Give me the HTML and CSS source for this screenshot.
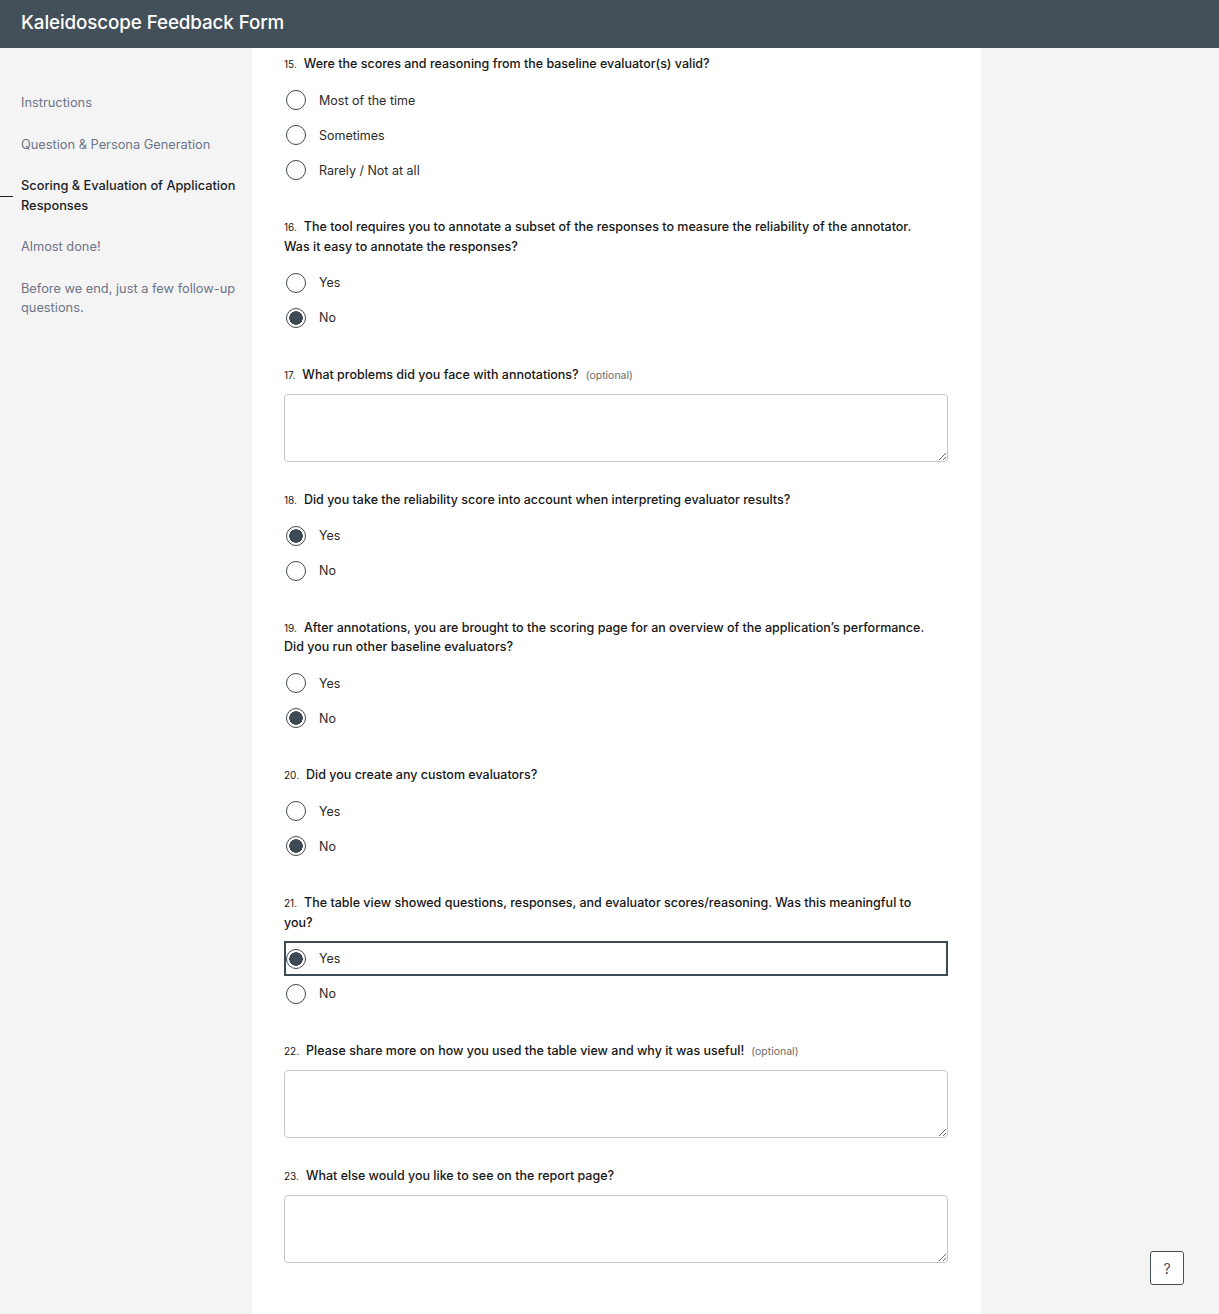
FILE: index.html
```html
<!DOCTYPE html>
<html lang="en">
<head>
    <meta charset="UTF-8">
    <title>Kaleidoscope Feedback Form</title>
    <link rel="stylesheet" href="styles.css">
</head>
<body>
<!--顶部标题栏-->
<header class="topbar">
    <h1 class="topbar_title">Kaleidoscope Feedback Form</h1>
</header>

<div class="layout">
    <!--左边导航-->
    <nav class="sidebar">
        <a href="#" class="sidebar_item">Instructions</a>
        <a href="#" class="sidebar_item">Question &amp; Persona Generation</a>
        <a href="#" class="sidebar_item current">Scoring &amp; Evaluation of Application Responses</a>
        <a href="#" class="sidebar_item">Almost done!</a>
        <a href="#" class="sidebar_item">Before we end, just a few follow-up questions.</a>
    </nav>

    <!--中间表单-->
    <main class="form_panel">
        <div class="question">
            <p class="question_label"><span class="question_num">15.</span>Were the scores and reasoning from the baseline evaluator(s) valid?</p>
            <div class="options">
                <label class="option"><input type="radio" name="q15"><span>Most of the time</span></label>
                <label class="option"><input type="radio" name="q15"><span>Sometimes</span></label>
                <label class="option"><input type="radio" name="q15"><span>Rarely / Not at all</span></label>
            </div>
        </div>

        <div class="question">
            <p class="question_label"><span class="question_num">16.</span>The tool requires you to annotate a subset of the responses to measure the reliability of the annotator. Was it easy to annotate the responses?</p>
            <div class="options">
                <label class="option"><input type="radio" name="q16"><span>Yes</span></label>
                <label class="option"><input type="radio" name="q16" checked><span>No</span></label>
            </div>
        </div>

        <div class="question">
            <p class="question_label"><span class="question_num">17.</span>What problems did you face with annotations?<span class="optional">(optional)</span></p>
            <textarea class="answer_box"></textarea>
        </div>

        <div class="question">
            <p class="question_label"><span class="question_num">18.</span>Did you take the reliability score into account when interpreting evaluator results?</p>
            <div class="options">
                <label class="option"><input type="radio" name="q18" checked><span>Yes</span></label>
                <label class="option"><input type="radio" name="q18"><span>No</span></label>
            </div>
        </div>

        <div class="question">
            <p class="question_label"><span class="question_num">19.</span>After annotations, you are brought to the scoring page for an overview of the application’s performance. Did you run other baseline evaluators?</p>
            <div class="options">
                <label class="option"><input type="radio" name="q19"><span>Yes</span></label>
                <label class="option"><input type="radio" name="q19" checked><span>No</span></label>
            </div>
        </div>

        <div class="question">
            <p class="question_label"><span class="question_num">20.</span>Did you create any custom evaluators?</p>
            <div class="options">
                <label class="option"><input type="radio" name="q20"><span>Yes</span></label>
                <label class="option"><input type="radio" name="q20" checked><span>No</span></label>
            </div>
        </div>

        <div class="question">
            <p class="question_label"><span class="question_num">21.</span>The table view showed questions, responses, and evaluator scores/reasoning. Was this meaningful to you?</p>
            <div class="options">
                <label class="option focused"><input type="radio" name="q21" checked><span>Yes</span></label>
                <label class="option"><input type="radio" name="q21"><span>No</span></label>
            </div>
        </div>

        <div class="question">
            <p class="question_label"><span class="question_num">22.</span>Please share more on how you used the table view and why it was useful!<span class="optional">(optional)</span></p>
            <textarea class="answer_box"></textarea>
        </div>

        <div class="question">
            <p class="question_label"><span class="question_num">23.</span>What else would you like to see on the report page?</p>
            <textarea class="answer_box"></textarea>
        </div>
    </main>
</div>

<!--右下角帮助按钮-->
<button class="help_btn" type="button">?</button>
</body>
</html>
```

FILE: styles.css
```css
*{
    margin: 0;
    padding: 0;
    box-sizing: border-box;
}
body
{
    font-family: Inter, "Noto Sans", sans-serif;
    background: #f4f4f4;
    color: #161616;
}
.topbar
{
    height: 48px;
    background: #435059;
    display: flex;
    align-items: center;
    padding: 0 0 4px 21px;
}
.topbar_title
{
    color: #fff;
    font-size: 18.8px;
    font-weight: 500;
    letter-spacing: -0.1px;
}
.layout
{
    display: flex;
    min-height: calc(100vh - 48px);
}

/*左边导航*/
.sidebar
{
    width: 252px;
    flex-shrink: 0;
    padding: 45px 8px 0 21px;
    display: flex;
    flex-direction: column;
    gap: 22px;
}
.sidebar_item
{
    position: relative;
    font-size: 12.8px;
    line-height: 19.5px;
    color: #6c7489;
    text-decoration: none;
}
.sidebar_item.current
{
    color: #1c1f26;
    font-weight: 500;
}
.sidebar_item.current::before
{
    content: '';
    position: absolute;
    left: -21px;
    top: 50%;
    width: 13px;
    height: 1px;
    background: #1c1f26;
}

/*中间表单*/
.form_panel
{
    width: 729px;
    flex-shrink: 0;
    background: #fff;
    padding: 6px 33px 40px 32px;
    display: flex;
    flex-direction: column;
    gap: 27.5px;
}
.question_label
{
    font-size: 12.5px;
    line-height: 19.5px;
    font-weight: 500;
    color: #161616;
    padding-right: 12px;
}
.question_num
{
    font-size: 10px;
    line-height: 1;
    font-weight: 400;
    margin-right: 7px;
}
.optional
{
    font-size: 10.5px;
    line-height: 1;
    font-weight: 400;
    color: #6a6a6a;
    margin-left: 7px;
}
.options
{
    margin-top: 9px;
    padding-bottom: 2px;
    display: flex;
    flex-direction: column;
}
.option
{
    height: 35px;
    display: flex;
    align-items: center;
    gap: 13px;
    padding-left: 2px;
    font-size: 12.5px;
    color: #2b2b2b;
    cursor: pointer;
}
.option.focused
{
    box-shadow: inset 0 0 0 2px #3d4a53;
}
.option input
{
    appearance: none;
    width: 20px;
    height: 20px;
    border: 1.5px solid #3d4a53;
    border-radius: 50%;
    background: #fff;
    margin: 0;
    flex-shrink: 0;
}
.option input:checked
{
    background: radial-gradient(circle, #3d4a53 0 6.5px, #fff 7px);
}
.answer_box
{
    display: block;
    margin-top: 10px;
    width: 100%;
    height: 68px;
    border: 1px solid #c6c6c6;
    border-radius: 4px;
    resize: vertical;
    font-family: inherit;
    font-size: 13px;
    padding: 8px;
}

/*帮助按钮*/
.help_btn
{
    position: fixed;
    right: 35px;
    bottom: 29px;
    width: 34px;
    height: 34px;
    background: #fff;
    border: 1px solid #435059;
    border-radius: 3px;
    color: #435059;
    font-family: Inter, sans-serif;
    font-size: 14px;
    cursor: pointer;
}
```
